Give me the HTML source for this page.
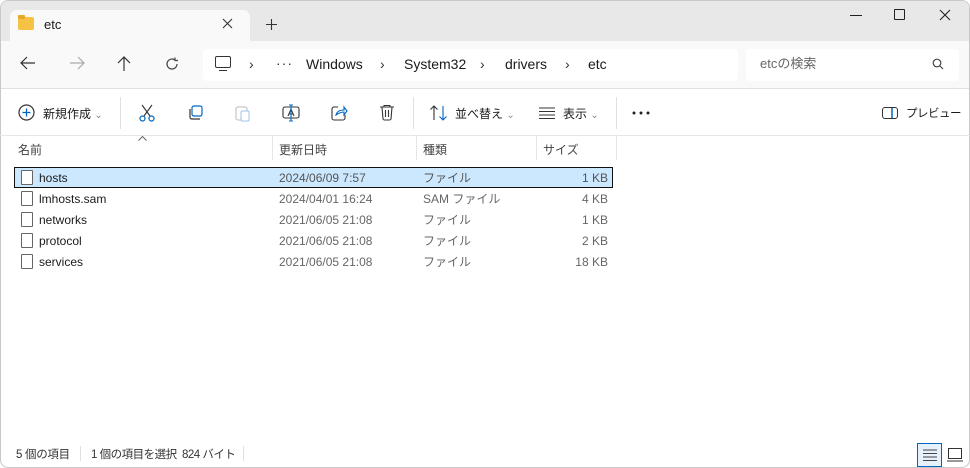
<!DOCTYPE html><html><head><meta charset="utf-8"><style>
*{margin:0;padding:0;box-sizing:border-box}
body{width:970px;height:468px;overflow:hidden;background:#fff;font-family:"Liberation Sans","Noto Sans CJK JP",sans-serif;color:#1a1a1a;position:relative}
.a{position:absolute}
.t{font-size:12px;white-space:nowrap;line-height:14px}
svg{position:absolute}
</style></head><body>
<div class="a" style="left:0;top:0;width:970px;height:468px;border:1px solid #c8c8c8;border-radius:8px;overflow:hidden">
<div class="a" style="left:0;top:0;width:970px;height:40px;background:#e8e8e8"></div>
<div class="a" style="left:9px;top:9px;width:240px;height:32px;background:#f9f9f9;border-radius:7px 7px 0 0"></div>
<div class="a" style="left:0;top:40px;width:970px;height:48px;background:#f9f9f9;border-bottom:1px solid #e0e0e0"></div>
<div class="a" style="left:202px;top:48px;width:535px;height:32px;background:#fff;border-radius:4px"></div>
<div class="a" style="left:745px;top:48px;width:213px;height:32px;background:#fff;border-radius:4px"></div>
</div>
<!-- tab -->
<div class="a" style="left:18px;top:17px;width:16px;height:13px;background:#f5c243;border-radius:2px"></div>
<div class="a" style="left:18px;top:15px;width:7px;height:4px;background:#e5a92a;border-radius:1px"></div>
<div class="a t" style="left:44px;top:18px;font-size:13px">etc</div>
<svg style="left:222px;top:18px" width="11" height="11"><path d="M1 1l9 9M10 1l-9 9" stroke="#333" stroke-width="1.1"/></svg>
<svg style="left:266px;top:19px" width="11" height="11"><path d="M5.5 0v11M0 5.5h11" stroke="#333" stroke-width="1.1"/></svg>
<div class="a" style="left:850px;top:15px;width:12px;height:1px;background:#222"></div>
<div class="a" style="left:894px;top:9px;width:11px;height:11px;border:1px solid #222;border-radius:1px"></div>
<svg style="left:939px;top:9px" width="12" height="12"><path d="M1 1l10 10M11 1L1 11" stroke="#222" stroke-width="1.1"/></svg>
<!-- nav -->
<svg style="left:20px;top:56px" width="16" height="14"><path d="M15 7H1M7 1L1 7l6 6" fill="none" stroke="#333" stroke-width="1.2"/></svg>
<svg style="left:69px;top:56px" width="16" height="14"><path d="M1 7h14M9 1l6 6-6 6" fill="none" stroke="#aaa" stroke-width="1.2"/></svg>
<svg style="left:117px;top:56px" width="14" height="16"><path d="M7 15V1M1 7l6-6 6 6" fill="none" stroke="#333" stroke-width="1.2"/></svg>
<svg style="left:165px;top:57px" width="14" height="14"><path d="M12 7a5 5 0 1 1-2-4M10 0.5V3.5H13" fill="none" stroke="#444" stroke-width="1.2"/></svg>
<div class="a" style="left:215px;top:56px;width:16px;height:12px;border:1.3px solid #333;border-radius:2px"></div>
<div class="a" style="left:219px;top:70px;width:8px;height:1.3px;background:#333"></div>
<div class="a t" style="left:249px;top:57px;font-size:14px;color:#333">›</div>
<div class="a t" style="left:276px;top:56px;font-size:14px;color:#333;letter-spacing:1px">···</div>
<div class="a t" style="left:306px;top:57px;font-size:14px">Windows</div>
<div class="a t" style="left:380px;top:57px;font-size:14px;color:#333">›</div>
<div class="a t" style="left:404px;top:57px;font-size:14px">System32</div>
<div class="a t" style="left:480px;top:57px;font-size:14px;color:#333">›</div>
<div class="a t" style="left:505px;top:57px;font-size:14px">drivers</div>
<div class="a t" style="left:565px;top:57px;font-size:14px;color:#333">›</div>
<div class="a t" style="left:588px;top:57px;font-size:14px">etc</div>
<div class="a t" style="left:760px;top:57px;font-size:13px;color:#666">etcの検索</div>
<svg style="left:932px;top:58px" width="12" height="12"><circle cx="5" cy="5" r="3.8" fill="none" stroke="#444" stroke-width="1.2"/><path d="M8 8L11 11" stroke="#444" stroke-width="1.2"/></svg>
<!-- toolbar -->
<svg style="left:18px;top:104px" width="17" height="17"><circle cx="8.5" cy="8.5" r="7.5" fill="none" stroke="#333" stroke-width="1.2"/><path d="M8.5 4.5v8M4.5 8.5h8" stroke="#0067c0" stroke-width="1.3"/></svg>
<div class="a t" style="left:43px;top:107px">新規作成 <span style="color:#888;font-size:10px">⌄</span></div>
<div class="a" style="left:120px;top:97px;width:1px;height:32px;background:#e0e0e0"></div>
<svg style="left:138px;top:104px" width="18" height="18"><path d="M4 1l8 11M14 1L6 12" stroke="#333" stroke-width="1.1" fill="none"/><circle cx="4.5" cy="14.5" r="2.5" fill="none" stroke="#0067c0" stroke-width="1.2"/><circle cx="13.5" cy="14.5" r="2.5" fill="none" stroke="#0067c0" stroke-width="1.2"/></svg>
<svg style="left:187px;top:105px" width="16" height="16"><rect x="5" y="1" width="10" height="10" rx="2" fill="none" stroke="#0067c0" stroke-width="1.2"/><path d="M3 4v8a2 2 0 0 0 2 2h8" fill="none" stroke="#333" stroke-width="1.2"/></svg>
<svg style="left:235px;top:104px" width="16" height="18"><rect x="1" y="3" width="11" height="13" rx="2" fill="none" stroke="#bbb"/><rect x="6" y="7" width="8" height="10" rx="1.5" fill="#fff" stroke="#9cc4e8"/></svg>
<svg style="left:282px;top:104px" width="18" height="18"><rect x="1" y="3" width="16" height="11" rx="2" fill="none" stroke="#333" stroke-width="1.1"/><path d="M6 12l3-7 3 7M7 10h4" stroke="#333" fill="none"/><path d="M9 1v16M7 1h4M7 17h4" stroke="#0067c0" stroke-width="1.1"/></svg>
<svg style="left:331px;top:104px" width="17" height="17"><path d="M7 3H3a2 2 0 0 0-2 2v9a2 2 0 0 0 2 2h9a2 2 0 0 0 2-2v-3" fill="none" stroke="#333" stroke-width="1.1"/><path d="M5 11c1-4 4-5 8-5V3l3 4-3 4V8c-3 0-5 1-8 3z" fill="none" stroke="#0067c0" stroke-width="1.1"/></svg>
<svg style="left:379px;top:104px" width="16" height="17"><path d="M1 3h14M5 3V1.5h6V3M3 3l1 12a1.5 1.5 0 0 0 1.5 1h5a1.5 1.5 0 0 0 1.5-1l1-12M6.5 6v7M9.5 6v7" fill="none" stroke="#333" stroke-width="1.1"/></svg>
<div class="a" style="left:413px;top:97px;width:1px;height:32px;background:#e0e0e0"></div>
<svg style="left:430px;top:105px" width="18" height="16"><path d="M4 15V1M0.5 4.5L4 1l3.5 3.5" fill="none" stroke="#333" stroke-width="1.1"/><path d="M13 1v14M9.5 11.5L13 15l3.5-3.5" fill="none" stroke="#0067c0" stroke-width="1.1"/></svg>
<div class="a t" style="left:455px;top:107px">並べ替え <span style="color:#888;font-size:10px">⌄</span></div>
<svg style="left:539px;top:107px" width="16" height="12"><path d="M0 1h16M0 4.5h16M0 8h16M0 11.5h16" stroke="#333"/></svg>
<div class="a t" style="left:563px;top:107px">表示 <span style="color:#888;font-size:10px">⌄</span></div>
<div class="a" style="left:616px;top:97px;width:1px;height:32px;background:#e0e0e0"></div>
<svg style="left:632px;top:111px" width="18" height="4"><circle cx="2" cy="2" r="1.5" fill="#222"/><circle cx="9" cy="2" r="1.5" fill="#222"/><circle cx="16" cy="2" r="1.5" fill="#222"/></svg>
<svg style="left:882px;top:107px" width="16" height="12"><rect x=".5" y=".5" width="15" height="11" rx="2.5" fill="none" stroke="#333"/><path d="M10 1v10" stroke="#0067c0" stroke-width="1.5"/></svg>
<div class="a t" style="left:906px;top:107px;font-size:11.5px;letter-spacing:-0.5px">プレビュー</div>
<div class="a" style="left:0;top:135px;width:970px;height:1px;background:#e6e6e6"></div>
<!-- headers -->
<svg style="left:138px;top:136px" width="9" height="5"><path d="M0.5 4.5L4.5 0.5l4 4" fill="none" stroke="#666"/></svg>
<div class="a t" style="left:18px;top:143px;color:#444">名前</div>
<div class="a" style="left:272px;top:136px;width:1px;height:24px;background:#e6e6e6"></div>
<div class="a t" style="left:279px;top:143px;color:#444">更新日時</div>
<div class="a" style="left:416px;top:136px;width:1px;height:24px;background:#e6e6e6"></div>
<div class="a t" style="left:423px;top:143px;color:#444">種類</div>
<div class="a" style="left:536px;top:136px;width:1px;height:24px;background:#e6e6e6"></div>
<div class="a t" style="left:543px;top:143px;color:#444">サイズ</div>
<div class="a" style="left:616px;top:136px;width:1px;height:24px;background:#e6e6e6"></div>
<!-- rows -->
<div class="a" style="left:14px;top:167px;width:599px;height:21px;background:#cce8ff;border:1px solid #111"></div>
<div class="a" style="left:21px;top:170px;width:12px;height:15px;border:1px solid #666;border-radius:1px;background:#fff"></div>
<div class="a t" style="left:39px;top:171px">hosts</div><div class="a t" style="left:279px;top:171px;color:#555">2024/06/09 7:57</div><div class="a t" style="left:423px;top:171px;color:#555">ファイル</div><div class="a t" style="left:560px;top:171px;width:48px;text-align:right;color:#555">1 KB</div>
<div class="a" style="left:21px;top:191px;width:12px;height:15px;border:1px solid #666;border-radius:1px"></div>
<div class="a t" style="left:39px;top:192px">lmhosts.sam</div><div class="a t" style="left:279px;top:192px;color:#666">2024/04/01 16:24</div><div class="a t" style="left:423px;top:192px;color:#666">SAM ファイル</div><div class="a t" style="left:560px;top:192px;width:48px;text-align:right;color:#666">4 KB</div>
<div class="a" style="left:21px;top:212px;width:12px;height:15px;border:1px solid #666;border-radius:1px"></div>
<div class="a t" style="left:39px;top:213px">networks</div><div class="a t" style="left:279px;top:213px;color:#666">2021/06/05 21:08</div><div class="a t" style="left:423px;top:213px;color:#666">ファイル</div><div class="a t" style="left:560px;top:213px;width:48px;text-align:right;color:#666">1 KB</div>
<div class="a" style="left:21px;top:233px;width:12px;height:15px;border:1px solid #666;border-radius:1px"></div>
<div class="a t" style="left:39px;top:234px">protocol</div><div class="a t" style="left:279px;top:234px;color:#666">2021/06/05 21:08</div><div class="a t" style="left:423px;top:234px;color:#666">ファイル</div><div class="a t" style="left:560px;top:234px;width:48px;text-align:right;color:#666">2 KB</div>
<div class="a" style="left:21px;top:254px;width:12px;height:15px;border:1px solid #666;border-radius:1px"></div>
<div class="a t" style="left:39px;top:255px">services</div><div class="a t" style="left:279px;top:255px;color:#666">2021/06/05 21:08</div><div class="a t" style="left:423px;top:255px;color:#666">ファイル</div><div class="a t" style="left:560px;top:255px;width:48px;text-align:right;color:#666">18 KB</div>
<!-- status -->
<div class="a t" style="left:16px;top:448px;color:#333;font-size:11.5px;letter-spacing:-0.3px">5 個の項目</div>
<div class="a" style="left:80px;top:446px;width:1px;height:15px;background:#e0e0e0"></div>
<div class="a t" style="left:91px;top:448px;color:#333;font-size:11.5px;letter-spacing:-0.5px">1 個の項目を選択&nbsp; 824 バイト</div>
<div class="a" style="left:243px;top:446px;width:1px;height:15px;background:#e0e0e0"></div>
<div class="a" style="left:917px;top:443px;width:25px;height:24px;background:#e5f1fb;border:1px solid #0067c0"></div>
<svg style="left:923px;top:449px" width="14" height="12"><path d="M0 1h14M0 4.5h14M0 8h14M0 11.5h14" stroke="#444"/></svg>
<svg style="left:947px;top:448px" width="16" height="14"><rect x="1.5" y=".5" width="13" height="10" fill="none" stroke="#333"/><path d="M0 13h16" stroke="#333"/></svg>
</body></html>
